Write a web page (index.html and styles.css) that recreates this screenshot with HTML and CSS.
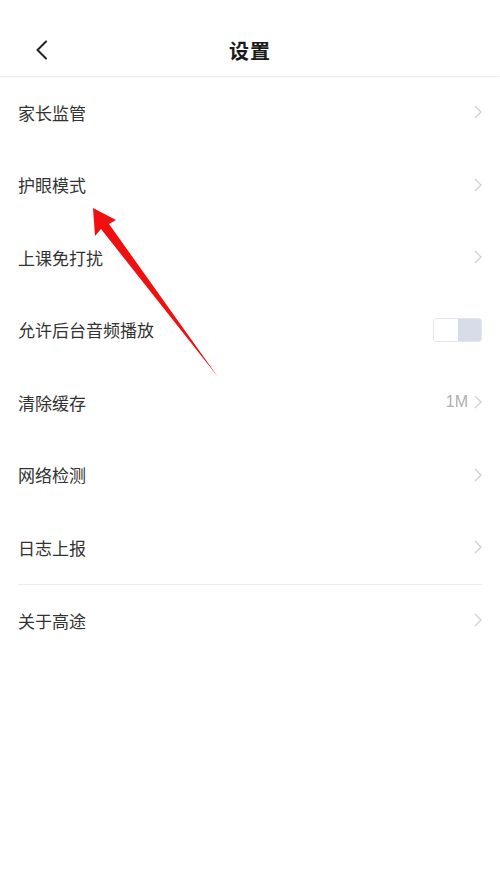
FILE: index.html
```html
<!DOCTYPE html>
<html lang="zh-CN">
<head>
<meta charset="utf-8">
<title>设置</title>
<link rel="stylesheet" href="styles.css">
</head>
<body>
<div class="page">
  <header class="header">
    <div class="bar">
      <svg class="back" width="14" height="20" viewBox="0 0 14 20"><path d="M11 1.5 L2.5 10 L11 18.5" fill="none" stroke="#222" stroke-width="2" stroke-linecap="round" stroke-linejoin="round"/></svg>
      <h1 class="title">设置</h1>
    </div>
  </header>
  <ul class="list">
    <li class="row"><span class="label">家长监管</span><span class="right"><svg class="chev" width="8" height="14" viewBox="0 0 8 14"><path d="M1 1 L7 7 L1 13" fill="none" stroke="#cfcfcf" stroke-width="1.3"/></svg></span></li>
    <li class="row"><span class="label">护眼模式</span><span class="right"><svg class="chev" width="8" height="14" viewBox="0 0 8 14"><path d="M1 1 L7 7 L1 13" fill="none" stroke="#cfcfcf" stroke-width="1.3"/></svg></span></li>
    <li class="row"><span class="label">上课免打扰</span><span class="right"><svg class="chev" width="8" height="14" viewBox="0 0 8 14"><path d="M1 1 L7 7 L1 13" fill="none" stroke="#cfcfcf" stroke-width="1.3"/></svg></span></li>
    <li class="row"><span class="label">允许后台音频播放</span><span class="right"><span class="toggle"><span class="knob"></span><span class="track"></span></span></span></li>
    <li class="row"><span class="label">清除缓存</span><span class="right"><span class="value">1M</span><svg class="chev" width="8" height="14" viewBox="0 0 8 14"><path d="M1 1 L7 7 L1 13" fill="none" stroke="#cfcfcf" stroke-width="1.3"/></svg></span></li>
    <li class="row"><span class="label">网络检测</span><span class="right"><svg class="chev" width="8" height="14" viewBox="0 0 8 14"><path d="M1 1 L7 7 L1 13" fill="none" stroke="#cfcfcf" stroke-width="1.3"/></svg></span></li>
    <li class="row"><span class="label">日志上报</span><span class="right"><svg class="chev" width="8" height="14" viewBox="0 0 8 14"><path d="M1 1 L7 7 L1 13" fill="none" stroke="#cfcfcf" stroke-width="1.3"/></svg></span></li>
    <li class="row row-sep"><span class="label">关于高途</span><span class="right"><svg class="chev" width="8" height="14" viewBox="0 0 8 14"><path d="M1 1 L7 7 L1 13" fill="none" stroke="#cfcfcf" stroke-width="1.3"/></svg></span></li>
  </ul>
  <svg class="arrow" width="500" height="889" viewBox="0 0 500 889"><polygon points="93,208 116,220 109,224 218,377 101,229 95,236" fill="#f01010"/></svg>
</div>
</body>
</html>
```
FILE: styles.css
```css
* { box-sizing: border-box; }
html, body { margin: 0; padding: 0; background: #fff; }
body {
  font-family: "Noto Sans CJK SC", "Noto Sans", sans-serif;
  color: #333;
}
.page { position: relative; width: 500px; min-height: 889px; }
.header {
  padding-top: 24px;
  border-bottom: 1px solid #efefef;
  box-shadow: 0 1px 2px rgba(0,0,0,0.03);
}
.bar {
  height: 52px;
  display: flex;
  align-items: center;
  justify-content: center;
  position: relative;
}
.back { position: absolute; left: 35px; top: 16px; }
.title {
  margin: 0;
  font-size: 20px;
  font-weight: 700;
  color: #1a1a1a;
  letter-spacing: 1px;
}
.list { list-style: none; margin: -1px 0 0; padding: 0 18px; }
.row {
  height: 72.5px;
  display: flex;
  align-items: center;
  justify-content: space-between;
}
.row-sep { border-top: 1px solid #ececec; }
.label { font-size: 17px; color: #333; }
.right { display: flex; align-items: center; gap: 6px; }
.chev { display: block; }
.value { font-size: 16px; color: #b0b0b0; font-family: "Liberation Sans", "Noto Sans", sans-serif; }
.toggle {
  display: flex;
  width: 49px;
  height: 24px;
  border: 1px solid #e4e6ee;
  border-radius: 3px;
  overflow: hidden;
}
.knob { flex: 1; background: #fff; }
.track { flex: 1; background: #d8dbe8; }
.arrow { position: absolute; left: 0; top: 0; pointer-events: none; }
```
